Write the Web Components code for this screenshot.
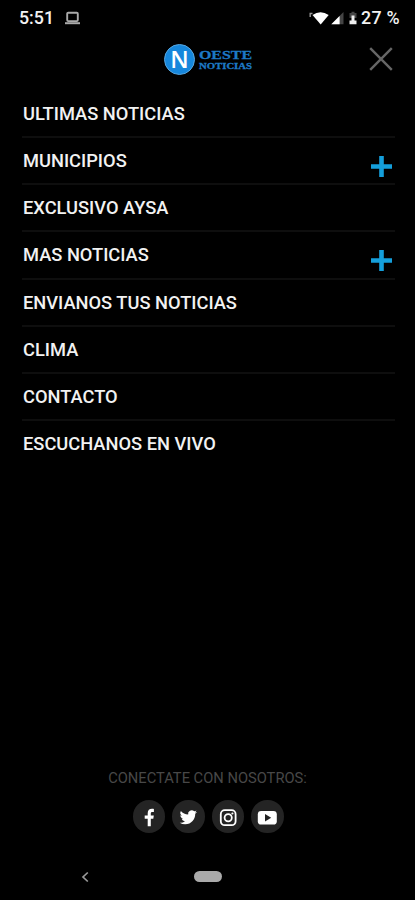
<!DOCTYPE html>
<html lang="es">
<head>
<meta charset="utf-8">
<meta name="viewport" content="width=device-width,initial-scale=1">
<title>Oeste Noticias</title>
<style>
html,body{margin:0;height:100%;background:#000}
body{font-family:Roboto,"Liberation Sans",sans-serif;color:#f2f2f2}
</style>
</head>
<body>
<app-screen>
  <status-bar slot="top" time="5:51" battery="27 %"></status-bar>
  <brand-header slot="top"></brand-header>
  <nav-menu>
    <menu-row>ULTIMAS NOTICIAS</menu-row>
    <menu-row expandable>MUNICIPIOS</menu-row>
    <menu-row>EXCLUSIVO AYSA</menu-row>
    <menu-row expandable>MAS NOTICIAS</menu-row>
    <menu-row>ENVIANOS TUS NOTICIAS</menu-row>
    <menu-row>CLIMA</menu-row>
    <menu-row>CONTACTO</menu-row>
    <menu-row>ESCUCHANOS EN VIVO</menu-row>
  </nav-menu>
  <social-links slot="bottom">CONECTATE CON NOSOTROS:
    <social-icon slot="icons" kind="facebook"></social-icon>
    <social-icon slot="icons" kind="twitter"></social-icon>
    <social-icon slot="icons" kind="instagram"></social-icon>
    <social-icon slot="icons" kind="youtube"></social-icon>
  </social-links>
  <system-nav slot="bottom"></system-nav>
</app-screen>
<script>
const define = (name, render) => customElements.define(name, class extends HTMLElement {
  constructor() {
    super();
    this.attachShadow({ mode: 'open' });
  }
  connectedCallback() {
    const t = document.createElement('template');
    t.innerHTML = render(this);
    this.shadowRoot.replaceChildren(t.content.cloneNode(true));
  }
});

define('app-screen', () => `
<style>
:host{display:flex;flex-direction:column;height:900px;width:415px;background:#000;overflow:hidden}
main{flex:1}
</style>
<slot name="top"></slot><main><slot></slot></main><slot name="bottom"></slot>`);

define('status-bar', el => `
<style>
:host{display:flex;align-items:center;height:36px;box-sizing:border-box;padding:0 15px 0 19px;font-size:17.8px;font-weight:500;line-height:20px}
.pc{margin-left:10px}
.icons{margin-left:auto;margin-right:4px}
.pct{letter-spacing:.3px}
svg{display:block}
</style>
<span>${el.getAttribute('time')}</span>
<svg class="pc" width="17" height="14" viewBox="0 0 17 14"><rect x="3.2" y="1.7" width="10.6" height="8.4" rx="1" fill="none" stroke="#aaa" stroke-width="1.9"/><path d="M1 11.2h15v2H1z" fill="#aaa"/></svg>
<svg class="icons" width="48" height="16" viewBox="0 0 48 16"><path d="M3.5 5Q11.5-.6 19.7 5L11.7 14.6Z" fill="#fff"/><path d="M1.2 7V3.5H3.5" fill="none" stroke="#999" stroke-width="1.4"/><path d="M34.5 2v12.2H22.3Z" fill="#444"/><path d="M30.6 5.9v8.3H22.3Z" fill="#fff"/><path d="M40.5 3h2V1.8h3V3h2v5h-7z" fill="#444"/><path d="M40.5 10.5h2V5.5h3v5h2v3.7h-7z" fill="#eee"/></svg>
<span class="pct">${el.getAttribute('battery')}</span>`);

define('brand-header', () => `
<style>
:host{display:grid;grid-template-columns:1fr auto 1fr;align-items:center;height:46px;padding:0 22px 0 24px}
.logo{grid-column:2;display:flex;align-items:center;gap:4px}
.disc{width:31px;height:31px;border-radius:50%;background:#1687dc;box-sizing:border-box;border:1px solid #58a6df;display:flex;align-items:center;justify-content:center;color:#fff;font:600 23.5px/31px "Open Sans",sans-serif}
.words svg{display:block;overflow:visible;font-family:"Liberation Serif",serif;font-weight:700}
.close{justify-self:end}
</style>
<div class="logo"><div class="disc">N</div>
<div class="words"><svg width="54" height="30" viewBox="0 0 54 30" fill="#1d79c5" stroke="#1d79c5" stroke-width=".3"><text x="0" y="14.5" font-size="13" textLength="53" lengthAdjust="spacingAndGlyphs">OESTE</text><text x="0" y="25" font-size="8" textLength="53" lengthAdjust="spacingAndGlyphs">NOTICIAS</text></svg></div></div>
<svg class="close" width="24" height="24" viewBox="0 0 24 24"><path d="M1.2 1.2 22.8 22.8M22.8 1.2 1.2 22.8" stroke="#666" stroke-width="2.4"/></svg>`);

define('nav-menu', () => `
<style>:host{display:block;padding:9px 20px 0 22px}</style><slot></slot>`);

define('menu-row', el => `
<style>
:host{display:flex;align-items:center;justify-content:space-between;height:47.15px;box-sizing:border-box;border-bottom:2px solid #0e0e0e;padding:0 3px 0 1px;font-size:18.3px;font-weight:500;white-space:nowrap}
:host(:last-of-type){border-bottom-color:transparent}
svg{display:block;margin-top:11px}
</style>
<span><slot></slot></span>
${el.hasAttribute('expandable') ? '<svg width="21" height="21" viewBox="0 0 21 21"><path d="M10.5 0v21M0 10.5h21" stroke="#149fdb" stroke-width="4.6"/></svg>' : ''}`);

define('social-links', () => `
<style>
:host{display:flex;flex-direction:column;align-items:center;font-size:14.7px;line-height:18px;color:#484848;height:84px}
.label{white-space:nowrap}
.icons{display:flex;gap:7px;margin-top:13px;padding-left:1px}
</style>
<div class="label"><slot></slot></div><div class="icons"><slot name="icons"></slot></div>`);

const glyphs = {
  facebook: '<path d="M14.7 26.2v-7.5h-3v-3.1h3v-2.4c0-3 1.7-4.4 4.3-4.4.9 0 1.6.1 1.9.1v3h-1.5c-1.3 0-1.6.7-1.6 1.6v2.1h3l-.5 3.1h-2.5v7.5z" fill="#fff"/>',
  twitter: '<g transform="translate(7.7 8.6) scale(.72)"><path d="M23.95 4.57a10 10 0 0 1-2.82.77 4.96 4.96 0 0 0 2.16-2.72c-.95.55-2 .95-3.13 1.18a4.92 4.92 0 0 0-8.38 4.48C7.69 8.1 4.07 6.13 1.64 3.16a4.92 4.92 0 0 0 1.52 6.57 4.9 4.9 0 0 1-2.23-.61v.06c0 2.38 1.7 4.37 3.95 4.83a5 5 0 0 1-2.21.08 4.94 4.94 0 0 0 4.6 3.42A9.87 9.87 0 0 1 0 19.54a13.99 13.99 0 0 0 7.55 2.21c9.05 0 14-7.5 14-13.98 0-.21 0-.42-.02-.63a9.94 9.94 0 0 0 2.42-2.57z" fill="#fff"/></g>',
  instagram: '<rect x="8.8" y="10.2" width="14.8" height="15" rx="4" fill="none" stroke="#fff" stroke-width="1.8"/><circle cx="16.2" cy="17.7" r="3.6" fill="none" stroke="#fff" stroke-width="1.8"/><circle cx="20.4" cy="13.5" r="1.1" fill="#fff"/>',
  youtube: '<rect x="6.8" y="11" width="19" height="13.6" rx="3.4" fill="#fff"/><path d="M14 14v7.4l6.2-3.7z" fill="#222"/>'
};
define('social-icon', el => `
<style>:host{display:block;width:32.5px;height:33px;border-radius:50%;background:#242424}svg{display:block}</style>
<svg width="33" height="33" viewBox="0 0 33 33">${glyphs[el.getAttribute('kind')]}</svg>`);

define('system-nav', () => `
<style>
:host{display:grid;grid-template-columns:1fr 28px 1fr;align-items:center;height:47px}
.back{justify-self:start;margin-left:81px}
.home{height:10.5px;border-radius:6px;background:#aaa}
</style>
<svg class="back" width="8" height="12" viewBox="0 0 8 12"><path d="M6.8 1.5 2 6l4.8 4.5" fill="none" stroke="#999" stroke-width="1.7"/></svg><div class="home"></div>`);
</script>
</body>
</html>
